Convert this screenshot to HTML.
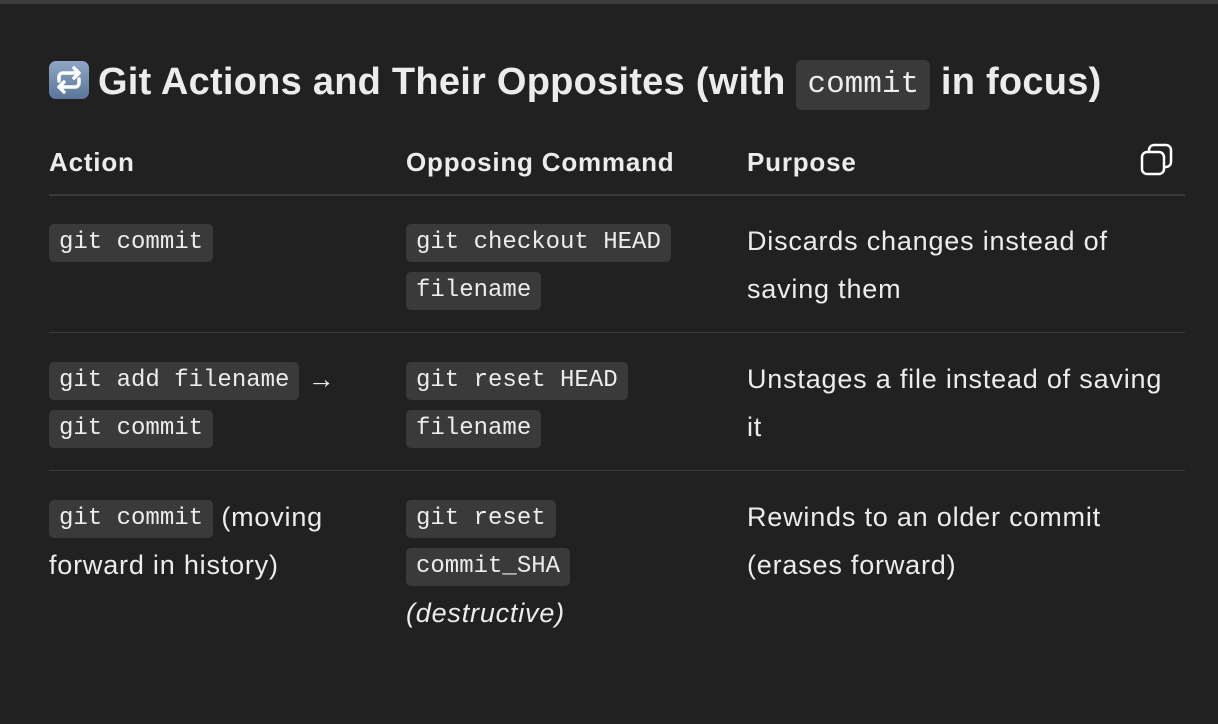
<!DOCTYPE html>
<html><head><style>
body{margin:0;width:1218px;height:724px;background:#212121;color:#ececec;font-family:"Liberation Sans",sans-serif;overflow:hidden;position:relative}
.top{position:absolute;top:0;left:0;right:0;height:4px;background:#3d3d3d}
h1{position:absolute;left:49px;top:60px;margin:0;font-size:38px;font-weight:bold;white-space:nowrap;letter-spacing:0.25px}
.emo{display:inline-block;width:40px;height:38px;border-radius:7px;background:linear-gradient(#8ea7c6,#5a7599);vertical-align:-5px;margin-right:9px;position:relative}
h1 code{font-family:"Liberation Mono",monospace;font-weight:normal;font-size:31px;background:#3a3a3a;border-radius:6px;padding:2px 11px;letter-spacing:0;display:inline-block;line-height:46px;vertical-align:2px}
.hd{position:absolute;top:147px;font-size:26px;font-weight:bold;letter-spacing:0.8px}
.line{position:absolute;left:49px;width:1136px;height:1px;background:#3a3a3a}
.c{position:absolute;font-size:27px;line-height:48px;letter-spacing:0.8px;white-space:nowrap}
code{font-family:"Liberation Mono",monospace;font-size:24px;background:#3a3a3a;border-radius:5px;padding:0 10px;letter-spacing:0;display:inline-block;line-height:38px;vertical-align:middle}
</style></head><body>
<div class="top"></div>
<h1><span class="emo"><svg width="40" height="38" viewBox="0 0 40 38"><path d="M10 20v-4a4 4 0 0 1 4-4h16M25 7l5 5-5 5M30 18v4a4 4 0 0 1-4 4H10M15 21l-5 5 5 5" stroke="#fff" stroke-width="3.5" fill="none" stroke-linecap="round" stroke-linejoin="round"/></svg></span>Git Actions and Their Opposites (with <code>commit</code> in focus)</h1>
<div class="hd" style="left:49px">Action</div>
<div class="hd" style="left:406px">Opposing Command</div>
<div class="hd" style="left:747px">Purpose</div>
<svg style="position:absolute;left:1139px;top:143px" width="36" height="34" viewBox="0 0 36 34"><rect x="10" y="2" width="22" height="22" rx="5" fill="none" stroke="#fff" stroke-width="2.5"/><rect x="3" y="9" width="22" height="22" rx="5" fill="#212121" stroke="#fff" stroke-width="2.5"/></svg>
<div class="line" style="top:194px;height:2px"></div>
<div class="c" style="left:49px;top:217px"><code>git commit</code></div>
<div class="c" style="left:406px;top:217px;width:300px"><code>git checkout HEAD</code><br><code>filename</code></div>
<div class="c" style="left:747px;top:217px;width:420px">Discards changes instead of<br>saving them</div>
<div class="line" style="top:332px"></div>
<div class="c" style="left:49px;top:355px"><code>git add filename</code> →<br><code>git commit</code></div>
<div class="c" style="left:406px;top:355px"><code>git reset HEAD</code><br><code>filename</code></div>
<div class="c" style="left:747px;top:355px">Unstages a file instead of saving<br>it</div>
<div class="line" style="top:470px"></div>
<div class="c" style="left:49px;top:493px"><code>git commit</code> (moving<br>forward in history)</div>
<div class="c" style="left:406px;top:493px"><code>git reset</code><br><code>commit_SHA</code><br><i>(destructive)</i></div>
<div class="c" style="left:747px;top:493px">Rewinds to an older commit<br>(erases forward)</div>
</body></html>
